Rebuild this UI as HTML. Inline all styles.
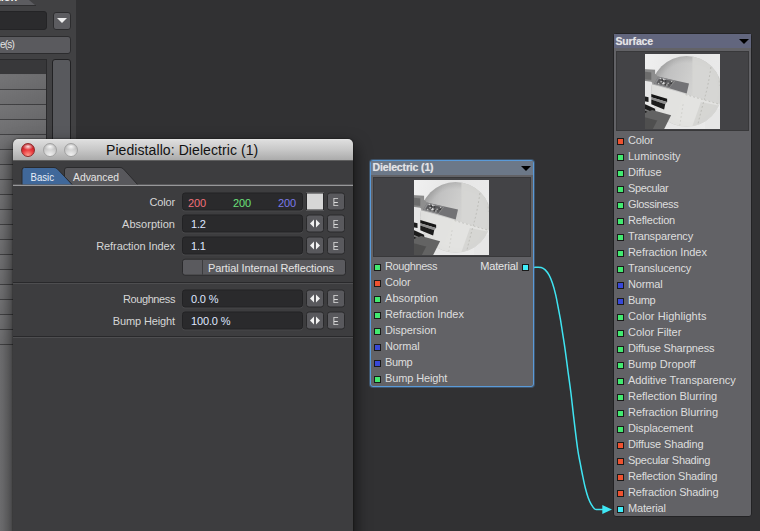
<!DOCTYPE html>
<html><head><meta charset="utf-8"><title>Piedistallo: Dielectric (1)</title>
<style>
*{box-sizing:border-box;margin:0;padding:0}
html,body{width:760px;height:531px;overflow:hidden;background:#313133}
body{position:relative;font-family:"Liberation Sans",sans-serif;font-size:11px;color:#dcdcdc}
.abs{position:absolute}
/* left panel */
#lp{left:0;top:0;width:76px;height:531px;background:#414143}
#lp .tab{left:0;top:0;width:36px;height:5px;background:#5c5c60;clip-path:polygon(0 0,29px 0,35px 5px,0 5px);overflow:hidden}
#lp .tab b{position:absolute;left:-3px;top:-8px;font-size:11px;line-height:11px;color:#f4f4f4;white-space:nowrap}
#lp .tabl{left:0;top:5px;width:36px;height:1px;background:#2e2e30}
#lp .tabt{left:-8px;top:-9px;font-size:11px;color:#eee;font-weight:bold}
#lp .inp{left:-5px;top:11px;width:51.500px;height:18.500px;background:#2b2b2d;border:1px solid #242426;border-radius:3px}
#lp .dd{left:52.500px;top:11.500px;width:18.500px;height:18px;background:#5c5c60;border:1px solid #2c2c2e;border-radius:3px}
#lp .dd:after{content:"";position:absolute;left:3.500px;top:5.500px;border-left:5px solid transparent;border-right:5px solid transparent;border-top:5px solid #efefef}
#lp .btn{left:-5px;top:35.500px;width:76px;height:18px;background:#5a5a5e;border:1px solid #2c2c2e;border-radius:3px;color:#e4e4e4;line-height:16px;padding-left:4px;font-size:10px;letter-spacing:-0.8px}
#lp .list{left:0;top:59px;width:47px;height:471px;border-right:1px solid #2a2a2c;border-top:1px solid #2a2a2c;background:repeating-linear-gradient(to bottom,#747476 0,#6e6e70 14px,#3c3c3e 14px,#3c3c3e 15px);background-position:0 15px}
#lp .lblank{left:0;top:345px;width:46px;height:200px;background:#707072}
#lp .lhead{left:0;top:60px;width:46px;height:14px;background:#38383a}
#lp .lfade{left:0;top:60px;width:46px;height:471px;background:linear-gradient(to right,rgba(120,120,122,.1),rgba(60,60,62,.12))}
#lp .sb{left:52px;top:59px;width:19px;height:480px;background:#58595d;border:1px solid #222224;border-radius:3px}
/* dialog */
#dlg{left:13px;top:139px;width:340px;height:400px;background:#3d3d3f;border-radius:5px 5px 0 0;box-shadow:0 8px 16px 2px rgba(0,0,0,.6),0 0 2px rgba(0,0,0,.7)}
#dlg .tb{left:0;top:0;width:340px;height:22px;border-radius:5px 5px 0 0;background:linear-gradient(#e6e6e6 0,#dcdcdc 8%,#c8c8c8 50%,#ababab 100%);border-bottom:1px solid #5e5e5e;text-align:center;color:#111;font-size:14px;line-height:23px}
#dlg .tb span{position:absolute;left:93px;top:0;white-space:nowrap;letter-spacing:0.08px}
.tl{position:absolute;top:3.5px;width:14px;height:14px;border-radius:50%;border:1px solid #a2a2a2;background:radial-gradient(ellipse 45% 28% at 50% 22%,rgba(255,255,255,.9),rgba(255,255,255,0) 100%),radial-gradient(circle at 50% 95%,#f2f2f2 0,#cfcfcf 50%,#b4b4b4 85%)}
.tl.red{border-color:#8e2a2a;background:radial-gradient(ellipse 45% 28% at 50% 22%,rgba(255,235,235,.95),rgba(255,190,190,0) 100%),radial-gradient(circle at 50% 95%,#ff9c8c 0,#ea3a3e 45%,#b8161c 85%)}
.tab1{left:9px;top:29px}
.row2{position:absolute;left:0;width:339px;height:18px;transform:translateY(0.5px)}
.lbl{position:absolute;right:177px;top:0;line-height:18px;white-space:nowrap;color:#d6d6d6}
.fld{position:absolute;left:169px;top:0;width:121px;height:18px;background:#2a2a2c;border:1px solid #222224;border-radius:3px;line-height:16px;padding-left:8px;color:#dfe6ff;letter-spacing:-0.15px;box-shadow:0 1px 0 rgba(255,255,255,.06)}
.sbtn{position:absolute;top:0;width:18px;height:18px;background:#59595d;border:1px solid #2a2a2c;border-radius:3px;text-align:center;line-height:16px;color:#e0e0e0}
.arr{left:293px}.eb{left:314px}.eb b{display:inline-block;font-weight:normal;transform:scaleX(.8);color:#dcdcdc}
.arr:before{content:"";position:absolute;left:3px;top:4px;border-top:4px solid transparent;border-bottom:4px solid transparent;border-right:4px solid #f2f2f2}
.arr:after{content:"";position:absolute;left:9px;top:4px;border-top:4px solid transparent;border-bottom:4px solid transparent;border-left:4px solid #f2f2f2}
.sep{position:absolute;left:0;width:340px;height:2px;background:#29292b;border-bottom:1px solid #4e4e50}
/* nodes */
.node{position:absolute;background:#626266;border-radius:3px}
.node .ttl{position:absolute;left:0;top:0;right:0;height:14px;font-weight:bold;font-size:10.5px;line-height:14px;padding-left:1.500px;color:#e4e4e6;letter-spacing:-0.15px;text-shadow:0 0 1px rgba(255,255,255,.4)}
.node .ttl:after{content:"";position:absolute;right:2px;top:4.500px;border-left:5px solid transparent;border-right:5px solid transparent;border-top:5px solid #000}
.node .pva{position:absolute;left:2px;right:2px;background:#434346;border:1px solid #38383a}
.pv{position:absolute}
.row{height:16px;line-height:16px;position:relative;white-space:nowrap}
.row span{position:absolute;left:14px;top:-1px;color:#dedede}
.p{position:absolute;left:3px;top:5px;width:7px;height:7px;border:1px solid #1a1a1a}
.p.r{background:#ee5230}.p.g{background:#42ea70}.p.b{background:#3848d8}.p.c{background:#40eefa}
</style></head><body>

<div id="lp" class="abs">
 <div class="tab abs"><b>tion</b></div><div class="tabl abs"></div>
 <div class="inp abs"></div>
 <div class="dd abs"></div>
 <div class="btn abs">e(s)</div>
 <div class="list abs"></div><div class="lblank abs"></div>
 <div class="lfade abs"></div>
 <div class="lhead abs"></div>
 <div class="sb abs"></div>
</div>

<!-- wire -->
<svg class="abs" style="left:0;top:0" width="760" height="531">
 <path d="M534.0 267.4 C535.2 267.4 539.3 267.1 541.2 267.5 C543.1 267.9 543.9 268.6 545.2 269.9 C546.5 271.2 547.9 273.0 549.1 275.2 C550.3 277.4 551.3 279.8 552.4 283.1 C553.5 286.4 554.7 290.7 555.7 294.9 C556.7 299.1 557.5 304.1 558.3 308.1 C559.1 312.1 559.7 315.4 560.3 318.7 C560.9 322.0 561.0 323.2 561.8 328.0 C562.5 332.8 563.7 339.7 564.8 347.3 C565.9 354.9 567.3 366.2 568.3 373.7 C569.3 381.1 569.9 384.9 570.8 392.0 C571.7 399.1 572.5 407.1 573.6 416.4 C574.7 425.7 576.4 440.2 577.5 448.0 C578.6 455.8 579.3 458.5 580.2 463.2 C581.1 467.9 581.9 472.2 582.8 476.4 C583.7 480.6 584.5 484.8 585.4 488.3 C586.3 491.8 587.1 494.8 588.1 497.5 C589.1 500.2 590.3 502.8 591.4 504.7 C592.5 506.6 593.6 508.2 594.7 509.0 C595.8 509.8 596.6 509.3 598.0 509.4 C599.4 509.5 602.2 509.4 603.0 509.4" fill="none" stroke="#3fe4f2" stroke-width="1.500" stroke-linejoin="round"/>
 <polygon points="602.300,505 602.300,514 612,509.500" fill="#3fe8f6"/>
</svg>

<div id="dlg" class="abs">
 <div class="tb abs"><i class="tl red" style="left:8px"></i><i class="tl" style="left:29.500px"></i><i class="tl" style="left:50.500px"></i><span>Piedistallo: Dielectric (1)</span></div>
 <svg class="abs" style="left:0;top:28px" width="340" height="22">
  <path d="M54 0.500 L107 0.500 Q109 0.500 110.500 2 L125 18 L59.500 18 L51.500 10 L51.500 3 Q51.500 0.500 54 0.500Z" fill="#58585c" stroke="#2a2a2c" stroke-width="1"/>
  <path d="M9 18 L9 3 Q9 0.500 11.500 0.500 L41 0.500 Q43 0.500 44.500 2 L59.500 18 Z" fill="#40689a" stroke="#2a2a2c" stroke-width="1"/>
  <rect x="0" y="17.700" width="340" height="1.300" fill="#98989a"/>
  <text x="17.500" y="13.500" font-size="11" fill="#e8eef8" textLength="23.500" lengthAdjust="spacingAndGlyphs" font-family="Liberation Sans, sans-serif">Basic</text>
  <text x="60" y="13.500" font-size="11" fill="#e4e4e4" textLength="46" lengthAdjust="spacingAndGlyphs" font-family="Liberation Sans, sans-serif">Advanced</text>
 </svg>

 <div class="row2" style="top:53px"><span class="lbl" style="letter-spacing:-0.18px">Color</span>
  <div class="fld" style="padding:0"><span class="abs" style="left:5px;top:1px;color:#f0707a">200</span><span class="abs" style="left:50px;top:1px;color:#6be07a">200</span><span class="abs" style="left:95px;top:1px;color:#7a7ae8">200</span></div>
  <div class="abs" style="left:293px;top:0;width:18px;height:18px;background:#d6d6d6;border:1px solid #2a2a2c"></div><div class="sbtn eb"><b>E</b></div></div>
 <div class="row2" style="top:75px"><span class="lbl" style="letter-spacing:0.04px">Absorption</span><div class="fld">1.2</div><div class="sbtn arr"></div><div class="sbtn eb"><b>E</b></div></div>
 <div class="row2" style="top:97px"><span class="lbl" style="letter-spacing:-0.08px">Refraction Index</span><div class="fld">1.1</div><div class="sbtn arr"></div><div class="sbtn eb"><b>E</b></div></div>
 <div class="abs" style="left:169px;top:119px;width:164px;height:17px;transform:translateY(0.7px);background:#5a5a5e;border:1px solid #2a2a2c;border-radius:3px;line-height:17px;color:#e4e4e4"><i class="abs" style="left:19px;top:0;width:1px;height:15px;background:#3c3c3e"></i><span class="abs" style="left:25px;top:0;white-space:nowrap;letter-spacing:-0.09px">Partial Internal Reflections</span></div>
 <div class="sep" style="top:143px"></div>
 <div class="row2" style="top:150px"><span class="lbl" style="letter-spacing:-0.40px">Roughness</span><div class="fld">0.0 %</div><div class="sbtn arr"></div><div class="sbtn eb"><b>E</b></div></div>
 <div class="row2" style="top:172px"><span class="lbl" style="letter-spacing:-0.12px">Bump Height</span><div class="fld">100.0 %</div><div class="sbtn arr"></div><div class="sbtn eb"><b>E</b></div></div>
 <div class="sep" style="top:197px"></div>
</div>

<!-- Dielectric node -->
<div class="node" style="left:370px;top:160px;width:164px;height:227px;border:1px solid #5a9ad8;box-shadow:0 0 0 1px rgba(90,150,210,.35)">
 <div class="ttl" style="background:#6c7888;height:13.500px;line-height:13px">Dielectric (1)</div>
 <div class="pva" style="top:16px;height:80px"></div>
 <svg width="0" height="0" style="position:absolute"></svg>
 <div style="position:absolute;left:43px;top:19px;width:75px;height:75px"><svg class="pv" width="75" height="75" viewBox="0 0 75 75">
<defs>
<linearGradient id="bga" x1="0" y1="0" x2="1" y2="0.3"><stop offset="0" stop-color="#f2f2f2"/><stop offset="0.5" stop-color="#e6e6e6"/><stop offset="1" stop-color="#eaeaea"/></linearGradient>
<linearGradient id="sga" gradientUnits="userSpaceOnUse" x1="8" y1="10" x2="60" y2="30"><stop offset="0" stop-color="#a6a6a6"/><stop offset="0.35" stop-color="#c2c2c2"/><stop offset="1" stop-color="#d8d8d6"/></linearGradient>
<radialGradient id="sea" cx="50%" cy="50%" r="50%"><stop offset="0.8" stop-color="#000" stop-opacity="0"/><stop offset="1" stop-color="#000" stop-opacity="0.1"/></radialGradient>
<clipPath id="cpa"><circle cx="41.5" cy="37.3" r="35.3"/></clipPath>
<clipPath id="cqa"><rect x="0" y="0" width="75" height="75"/></clipPath>
<filter id="bla" x="-5%" y="-5%" width="110%" height="110%"><feGaussianBlur stdDeviation="0.55"/></filter>
</defs>
<g clip-path="url(#cqa)"><g filter="url(#bla)">
<rect x="-5" y="-5" width="85" height="85" fill="url(#bga)"/>
<polygon points="-2.0,14.9 10.1,15.8 10.1,28.2 -2.0,26.7" fill="#8a8a8a"/>
<polygon points="-2.0,17.6 7.1,18.4 8.6,25.9 -2.0,25.2" fill="#6c6c6c"/>
<polygon points="-2.0,27.4 13.1,28.9 13.1,62.8 -2.0,62.8" fill="#e6e6e6"/>
<rect x="60" y="55" width="20" height="25" fill="#e6e6e6"/>
<circle cx="41.5" cy="37.3" r="35.3" fill="url(#sga)"/>
<circle cx="41.5" cy="37.3" r="35.3" fill="url(#sea)"/>
<g clip-path="url(#cpa)">
<polygon points="47.4,-0.8 80.6,-0.8 80.6,52.0 47.4,42.5" fill="#d6d6d4" opacity="0.9"/>
<polygon points="3.4,29.3 40.5,40.1 80.6,51.7 80.6,76.4 3.4,76.4" fill="#e4e4e2" opacity="0.9"/>
<polygon points="55.9,47.9 80.6,53.0 80.6,76.4 45.9,76.4" fill="#d2d2d0" opacity="0.8"/>
</g>
<polygon points="6.3,16.1 13.1,22.6 8.9,29.7 6.3,27.9" fill="#8e8e8e"/>
<polygon points="13.1,22.6 30.4,26.4 44.0,29.4 41.7,39.6 24.4,34.2 8.9,29.7" fill="#727274"/>
<polygon points="13.1,22.9 30.4,26.7 24.5,33.9 9.5,29.5" fill="#8c8c8e"/>
<polygon points="14.3,24.2 28.8,27.3 24.5,33.0 11.3,29.2" fill="#5a5a5c"/>
<circle cx="16.1" cy="27.7" r="0.7" fill="#e0e0e0"/>
<circle cx="26.1" cy="29.4" r="0.7" fill="#303030"/>
<circle cx="15.2" cy="24.5" r="0.7" fill="#e0e0e0"/>
<circle cx="17.4" cy="26.2" r="0.7" fill="#303030"/>
<circle cx="18.6" cy="29.8" r="0.7" fill="#e0e0e0"/>
<circle cx="17.5" cy="29.7" r="0.7" fill="#c8c8c8"/>
<circle cx="20.9" cy="30.5" r="0.7" fill="#303030"/>
<circle cx="19.9" cy="25.5" r="0.7" fill="#c8c8c8"/>
<circle cx="13.7" cy="29.5" r="0.7" fill="#c8c8c8"/>
<circle cx="18.6" cy="25.3" r="0.7" fill="#e0e0e0"/>
<circle cx="19.0" cy="29.2" r="0.7" fill="#e0e0e0"/>
<circle cx="21.9" cy="31.0" r="0.7" fill="#e0e0e0"/>
<circle cx="23.1" cy="29.3" r="0.7" fill="#c8c8c8"/>
<circle cx="26.7" cy="27.4" r="0.7" fill="#c8c8c8"/>
<circle cx="20.7" cy="27.0" r="0.7" fill="#303030"/>
<circle cx="18.7" cy="28.7" r="0.7" fill="#e0e0e0"/>
<polygon points="6.3,39.9 22.1,44.7 22.1,48.0 6.3,43.2" fill="#161616"/>
<polygon points="6.3,43.2 22.1,48.0 20.2,50.2 6.3,45.6" fill="#8e8e8e"/>
<polygon points="6.3,45.6 20.2,50.2 19.1,55.6 6.3,50.2" fill="#1a1a1a"/>
<polygon points="-2.0,42.0 3.5,43.2 3.5,48.0 -2.0,47.1" fill="#1c1c1c"/>
<polygon points="-2.0,49.2 10.1,54.7 11.3,64.6 -2.0,60.1" fill="#1e1e1e"/>
<polygon points="-2.0,54.1 10.7,59.5 10.8,61.0 -2.0,55.9" fill="#777"/>
<polygon points="7.1,56.0 26.1,61.3 18.4,76.4 -2.0,76.4 -2.0,59.8" fill="#646464"/>
<polygon points="-2.0,62.8 12.3,66.6 7.1,76.4 -2.0,76.4" fill="#505050"/>
</g>
<g clip-path="url(#cpa)" fill="none" stroke="#8a8a82" stroke-width="0.6" stroke-dasharray="1.8 2.2" opacity="0.55">
<path d="M65.9 13.1 Q63.6 30.1 59.7 44.0 T52.0 74.1"/>
<path d="M40.5 40.6 L75.2 50.5"/>
<path d="M38.1 50.2 L34.6 72.6" opacity="0.6"/>
<path d="M73.6 14.7 L74.4 31.7" opacity="0.6"/>
</g>
</g>
</svg></div>
 <div style="position:absolute;left:0;top:98px;width:162px">
 <div class="row"><i class="p g"></i><span style="letter-spacing:-0.40px">Roughness</span></div>
<div class="row"><i class="p r"></i><span style="letter-spacing:-0.18px">Color</span></div>
<div class="row"><i class="p g"></i><span style="letter-spacing:0.04px">Absorption</span></div>
<div class="row"><i class="p g"></i><span style="letter-spacing:-0.08px">Refraction Index</span></div>
<div class="row"><i class="p g"></i><span style="letter-spacing:-0.07px">Dispersion</span></div>
<div class="row"><i class="p b"></i><span style="letter-spacing:-0.14px">Normal</span></div>
<div class="row"><i class="p b"></i><span style="letter-spacing:-0.39px">Bump</span></div>
<div class="row"><i class="p g"></i><span style="letter-spacing:-0.12px">Bump Height</span></div>
 </div>
 <div class="abs" style="right:5px;top:97px;height:16px;line-height:16px;color:#e6e6e6;padding-right:10px;letter-spacing:-0.17px">Material<i class="p c" style="left:auto;right:-1px;top:6px"></i></div>
</div>

<!-- Surface node -->
<div class="node" style="left:613px;top:33px;width:139px;height:484px;border:1px solid #232325">
 <div class="ttl" style="background:#62667e">Surface</div>
 <div class="pva" style="top:17px;height:80px"></div>
 <div style="position:absolute;left:31px;top:20px;width:75px;height:75px"><svg class="pv" width="75" height="75" viewBox="0 0 75 75">
<defs>
<linearGradient id="bgb" x1="0" y1="0" x2="1" y2="0.3"><stop offset="0" stop-color="#f2f2f2"/><stop offset="0.5" stop-color="#e6e6e6"/><stop offset="1" stop-color="#eaeaea"/></linearGradient>
<linearGradient id="sgb" gradientUnits="userSpaceOnUse" x1="8" y1="10" x2="60" y2="30"><stop offset="0" stop-color="#a6a6a6"/><stop offset="0.35" stop-color="#c2c2c2"/><stop offset="1" stop-color="#d8d8d6"/></linearGradient>
<radialGradient id="seb" cx="50%" cy="50%" r="50%"><stop offset="0.8" stop-color="#000" stop-opacity="0"/><stop offset="1" stop-color="#000" stop-opacity="0.1"/></radialGradient>
<clipPath id="cpb"><circle cx="41.5" cy="37.3" r="35.3"/></clipPath>
<clipPath id="cqb"><rect x="0" y="0" width="75" height="75"/></clipPath>
<filter id="blb" x="-5%" y="-5%" width="110%" height="110%"><feGaussianBlur stdDeviation="0.55"/></filter>
</defs>
<g clip-path="url(#cqb)"><g filter="url(#blb)">
<rect x="-5" y="-5" width="85" height="85" fill="url(#bgb)"/>
<polygon points="-2.0,14.9 10.1,15.8 10.1,28.2 -2.0,26.7" fill="#8a8a8a"/>
<polygon points="-2.0,17.6 7.1,18.4 8.6,25.9 -2.0,25.2" fill="#6c6c6c"/>
<polygon points="-2.0,27.4 13.1,28.9 13.1,62.8 -2.0,62.8" fill="#e6e6e6"/>
<rect x="60" y="55" width="20" height="25" fill="#e6e6e6"/>
<circle cx="41.5" cy="37.3" r="35.3" fill="url(#sgb)"/>
<circle cx="41.5" cy="37.3" r="35.3" fill="url(#seb)"/>
<g clip-path="url(#cpb)">
<polygon points="47.4,-0.8 80.6,-0.8 80.6,52.0 47.4,42.5" fill="#d6d6d4" opacity="0.9"/>
<polygon points="3.4,29.3 40.5,40.1 80.6,51.7 80.6,76.4 3.4,76.4" fill="#e4e4e2" opacity="0.9"/>
<polygon points="55.9,47.9 80.6,53.0 80.6,76.4 45.9,76.4" fill="#d2d2d0" opacity="0.8"/>
</g>
<polygon points="6.3,16.1 13.1,22.6 8.9,29.7 6.3,27.9" fill="#8e8e8e"/>
<polygon points="13.1,22.6 30.4,26.4 44.0,29.4 41.7,39.6 24.4,34.2 8.9,29.7" fill="#727274"/>
<polygon points="13.1,22.9 30.4,26.7 24.5,33.9 9.5,29.5" fill="#8c8c8e"/>
<polygon points="14.3,24.2 28.8,27.3 24.5,33.0 11.3,29.2" fill="#5a5a5c"/>
<circle cx="16.1" cy="27.7" r="0.7" fill="#e0e0e0"/>
<circle cx="26.1" cy="29.4" r="0.7" fill="#303030"/>
<circle cx="15.2" cy="24.5" r="0.7" fill="#e0e0e0"/>
<circle cx="17.4" cy="26.2" r="0.7" fill="#303030"/>
<circle cx="18.6" cy="29.8" r="0.7" fill="#e0e0e0"/>
<circle cx="17.5" cy="29.7" r="0.7" fill="#c8c8c8"/>
<circle cx="20.9" cy="30.5" r="0.7" fill="#303030"/>
<circle cx="19.9" cy="25.5" r="0.7" fill="#c8c8c8"/>
<circle cx="13.7" cy="29.5" r="0.7" fill="#c8c8c8"/>
<circle cx="18.6" cy="25.3" r="0.7" fill="#e0e0e0"/>
<circle cx="19.0" cy="29.2" r="0.7" fill="#e0e0e0"/>
<circle cx="21.9" cy="31.0" r="0.7" fill="#e0e0e0"/>
<circle cx="23.1" cy="29.3" r="0.7" fill="#c8c8c8"/>
<circle cx="26.7" cy="27.4" r="0.7" fill="#c8c8c8"/>
<circle cx="20.7" cy="27.0" r="0.7" fill="#303030"/>
<circle cx="18.7" cy="28.7" r="0.7" fill="#e0e0e0"/>
<polygon points="6.3,39.9 22.1,44.7 22.1,48.0 6.3,43.2" fill="#161616"/>
<polygon points="6.3,43.2 22.1,48.0 20.2,50.2 6.3,45.6" fill="#8e8e8e"/>
<polygon points="6.3,45.6 20.2,50.2 19.1,55.6 6.3,50.2" fill="#1a1a1a"/>
<polygon points="-2.0,42.0 3.5,43.2 3.5,48.0 -2.0,47.1" fill="#1c1c1c"/>
<polygon points="-2.0,49.2 10.1,54.7 11.3,64.6 -2.0,60.1" fill="#1e1e1e"/>
<polygon points="-2.0,54.1 10.7,59.5 10.8,61.0 -2.0,55.9" fill="#777"/>
<polygon points="7.1,56.0 26.1,61.3 18.4,76.4 -2.0,76.4 -2.0,59.8" fill="#646464"/>
<polygon points="-2.0,62.8 12.3,66.6 7.1,76.4 -2.0,76.4" fill="#505050"/>
</g>
<g clip-path="url(#cpb)" fill="none" stroke="#8a8a82" stroke-width="0.6" stroke-dasharray="1.8 2.2" opacity="0.55">
<path d="M65.9 13.1 Q63.6 30.1 59.7 44.0 T52.0 74.1"/>
<path d="M40.5 40.6 L75.2 50.5"/>
<path d="M38.1 50.2 L34.6 72.6" opacity="0.6"/>
<path d="M73.6 14.7 L74.4 31.7" opacity="0.6"/>
</g>
</g>
</svg></div>
 <div style="position:absolute;left:0;top:99px;width:137px">
 <div class="row"><i class="p r"></i><span style="letter-spacing:-0.18px">Color</span></div>
<div class="row"><i class="p g"></i><span>Luminosity</span></div>
<div class="row"><i class="p g"></i><span style="letter-spacing:-0.06px">Diffuse</span></div>
<div class="row"><i class="p g"></i><span style="letter-spacing:-0.39px">Specular</span></div>
<div class="row"><i class="p g"></i><span style="letter-spacing:-0.34px">Glossiness</span></div>
<div class="row"><i class="p g"></i><span style="letter-spacing:-0.19px">Reflection</span></div>
<div class="row"><i class="p g"></i><span style="letter-spacing:-0.15px">Transparency</span></div>
<div class="row"><i class="p g"></i><span style="letter-spacing:-0.08px">Refraction Index</span></div>
<div class="row"><i class="p g"></i><span style="letter-spacing:-0.15px">Translucency</span></div>
<div class="row"><i class="p b"></i><span style="letter-spacing:-0.14px">Normal</span></div>
<div class="row"><i class="p b"></i><span style="letter-spacing:-0.39px">Bump</span></div>
<div class="row"><i class="p g"></i><span style="letter-spacing:0.05px">Color Highlights</span></div>
<div class="row"><i class="p g"></i><span style="letter-spacing:-0.04px">Color Filter</span></div>
<div class="row"><i class="p g"></i><span style="letter-spacing:-0.20px">Diffuse Sharpness</span></div>
<div class="row"><i class="p g"></i><span>Bump Dropoff</span></div>
<div class="row"><i class="p g"></i><span style="letter-spacing:-0.06px">Additive Transparency</span></div>
<div class="row"><i class="p g"></i><span style="letter-spacing:-0.04px">Reflection Blurring</span></div>
<div class="row"><i class="p g"></i><span style="letter-spacing:-0.06px">Refraction Blurring</span></div>
<div class="row"><i class="p g"></i><span style="letter-spacing:-0.14px">Displacement</span></div>
<div class="row"><i class="p r"></i><span style="letter-spacing:-0.14px">Diffuse Shading</span></div>
<div class="row"><i class="p r"></i><span style="letter-spacing:-0.29px">Specular Shading</span></div>
<div class="row"><i class="p r"></i><span style="letter-spacing:-0.18px">Reflection Shading</span></div>
<div class="row"><i class="p r"></i><span style="letter-spacing:-0.18px">Refraction Shading</span></div>
<div class="row"><i class="p c"></i><span style="letter-spacing:-0.17px">Material</span></div>
 </div>
</div>

</body></html>
